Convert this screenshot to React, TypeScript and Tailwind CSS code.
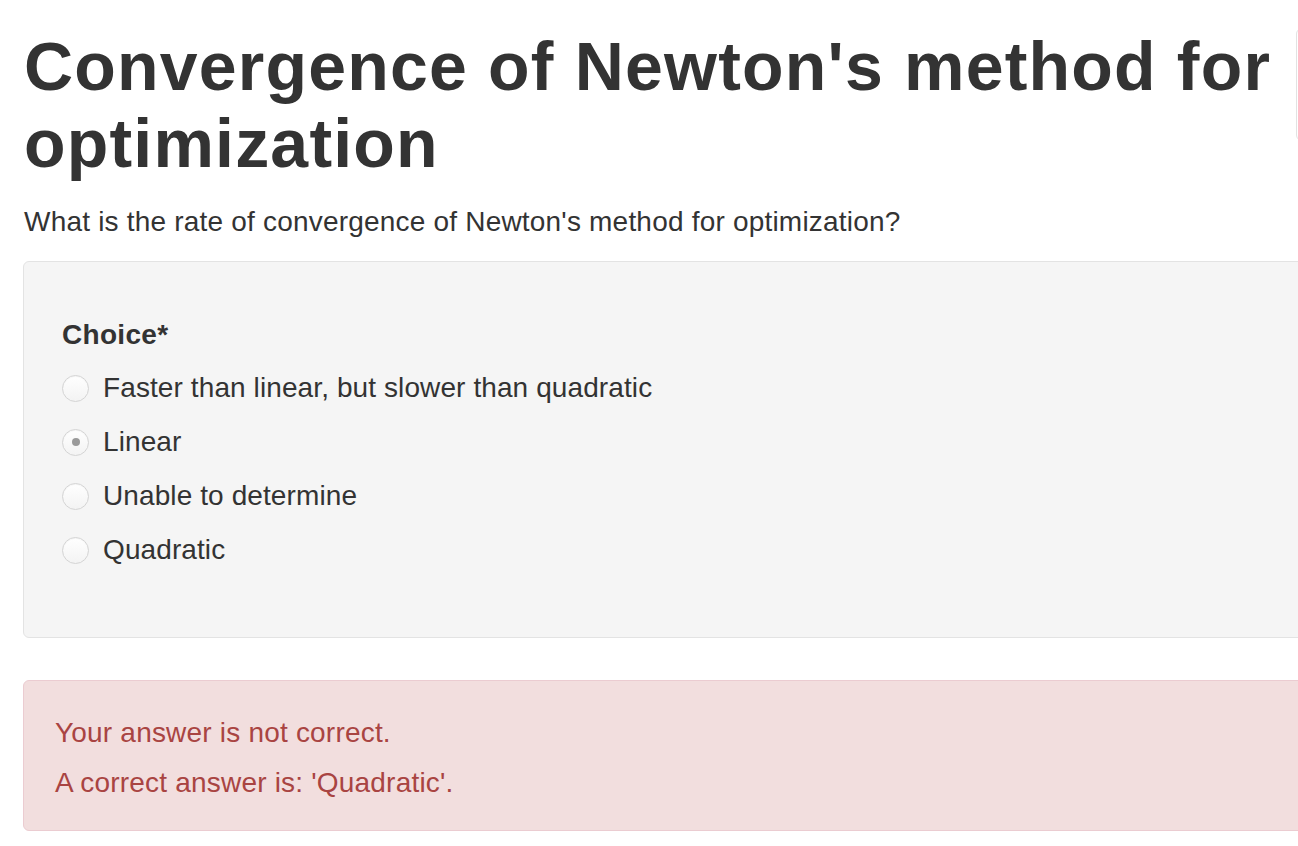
const choices = [
  { label: "Faster than linear, but slower than quadratic", checked: false },
  { label: "Linear", checked: true },
  { label: "Unable to determine", checked: false },
  { label: "Quadratic", checked: false },
];

function Radio({ checked }: { checked: boolean }) {
  return (
    <span className="flex h-[27px] w-[27px] shrink-0 items-center justify-center rounded-full border border-[#d4d4d4] bg-gradient-to-b from-[#ffffff] to-[#f3f3f3] shadow-[inset_0_1px_1px_rgba(0,0,0,0.04)]">
      {checked && <span className="h-[8px] w-[8px] rounded-full bg-[#9a9a9a]" />}
    </span>
  );
}

export default function App() {
  return (
    <div className="h-[846px] w-[1298px] overflow-hidden bg-white font-['Liberation_Sans',Arial,sans-serif] text-[#333333]">
      <div className="w-[1420px] pl-[23px] pt-[28px]">
        <div className="flex items-start">
          <h1 className="w-[1273px] shrink-0 pl-px text-[68px] font-bold leading-[77px] tracking-[1.2px]">
            Convergence of Newton's method for optimization
          </h1>
          <div className="mt-0 h-[113px] w-[120px] rounded-[6px] border border-[#e2e2e2] bg-white" />
        </div>

        <p className="mt-[23px] pl-px text-[28px] leading-[34px] tracking-[0.2px]">
          What is the rate of convergence of Newton's method for optimization?
        </p>

        <div className="mt-[22px] rounded-[6px] border border-[#e3e3e3] bg-[#f5f5f5] pb-[60px] pl-[38px] pt-[56px]">
          <div className="mb-[9px] text-[28px] font-bold leading-[34px] tracking-[0.3px]">Choice*</div>
          {choices.map((c) => (
            <div key={c.label} className="flex h-[54px] items-center gap-[14px]">
              <Radio checked={c.checked} />
              <span className="text-[28px] leading-[34px] tracking-[0.1px]">{c.label}</span>
            </div>
          ))}
        </div>

        <div className="mt-[42px] rounded-[6px] border border-[#ebccd1] bg-[#f2dede] pb-[30px] pl-[31px] pt-[35px] text-[#a94442]">
          <p className="text-[28px] leading-[34px] tracking-[0.2px]">Your answer is not correct.</p>
          <p className="mt-[16px] text-[28px] leading-[34px] tracking-[0.2px]">
            A correct answer is: 'Quadratic'.
          </p>
        </div>
      </div>
    </div>
  );
}
